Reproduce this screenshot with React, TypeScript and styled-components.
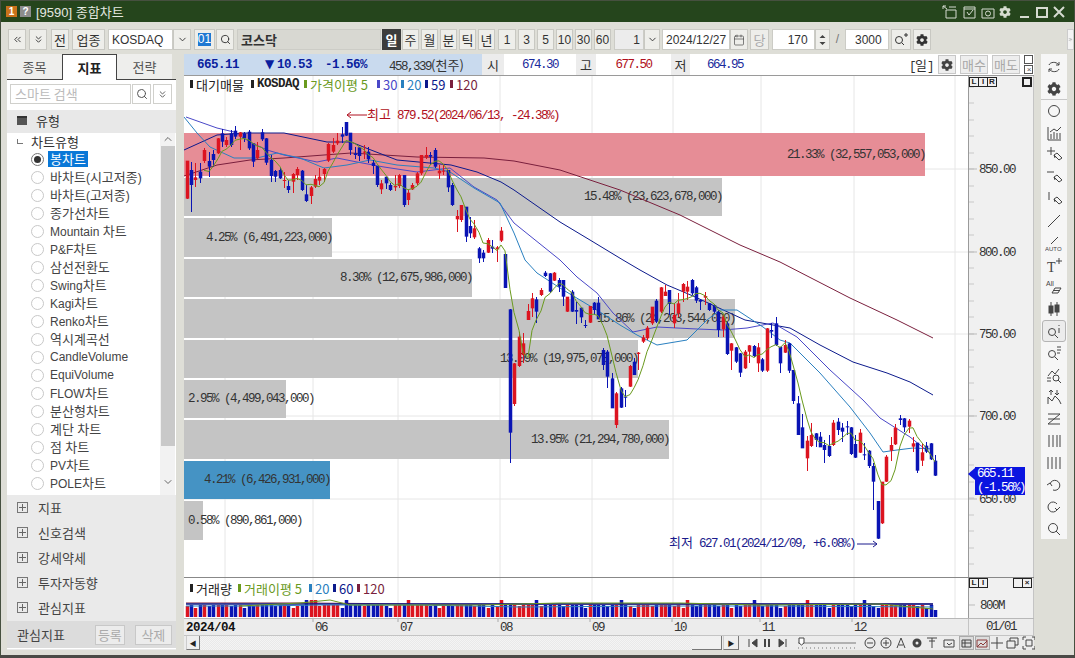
import React from "react";
import styled, { createGlobalStyle } from "styled-components";
import { FaCog } from "react-icons/fa";
import {
  Calendar,
  ChevronDown,
  ChevronUp,
  ChevronsDown,
  ChevronsLeft,
  ChevronsRight,
  Search,
} from "lucide-react";

const SANS = `"Liberation Sans", "Noto Sans CJK KR", sans-serif`;
const MONO = `"Liberation Mono", "Noto Sans CJK KR", monospace`;
const KO = `"Noto Sans CJK KR", sans-serif`;

const RED = "#dc1420";
const BLUE = "#0a14b4";
const C_MA5 = "#6a9a1e";
const C_MA20 = "#2a80c0";
const C_MA30 = "#4a48c8";
const C_MA59 = "#0c1a8c";
const C_MA120 = "#7a1f3d";

const GlobalStyle = createGlobalStyle`
  html, body { margin: 0; padding: 0; background: #deded7; overflow: hidden; }
  * { box-sizing: border-box; }
`;

const Window = styled.div`
  width: 1075px;
  height: 658px;
  display: flex;
  flex-direction: column;
  background: #deded7;
  border: 1px solid #46503f;
  border-bottom: 3px solid #4a4a46;
  font-family: ${SANS};
  font-size: 12px;
  color: #222;
  overflow: hidden;
`;

const TitleBar = styled.div`
  height: 21px;
  flex: none;
  display: flex;
  align-items: center;
  background: #25451c;
  padding: 0 8px 0 5px;
  color: #e4e8e0;
  font-size: 13px;
`;

const TitleBadge = styled.span<{ $bg: string }>`
  width: 11px;
  height: 11px;
  margin-right: 3px;
  display: flex;
  align-items: center;
  justify-content: center;
  background: ${(p) => p.$bg};
  color: #fff;
  font-size: 10px;
  font-weight: bold;
`;

const TitleText = styled.span`
  margin-left: 2px;
  flex: 1;
`;

const TitleIcons = styled.div`
  display: flex;
  align-items: center;
  gap: 3px;
  color: #d5dbd0;
`;

const Toolbar = styled.div`
  height: 31px;
  flex: none;
  display: flex;
  align-items: flex-end;
  gap: 2px;
  padding: 0 0 3px 7px;
`;

const Btn = styled.div<{ $w: number; $ml?: number; $dark?: boolean; $muted?: boolean }>`
  width: ${(p) => p.$w}px;
  height: 21px;
  flex: none;
  margin-left: ${(p) => p.$ml ?? 0}px;
  display: flex;
  align-items: center;
  justify-content: center;
  background: ${(p) => (p.$dark ? "#3c3c3c" : "#eeeeea")};
  color: ${(p) => (p.$dark ? "#fff" : p.$muted ? "#aaa" : "#333")};
  border: 1px solid ${(p) => (p.$dark ? "#3c3c3c" : "#c8c8c2")};
  font-family: ${KO};
  font-size: 13px;
  font-weight: ${(p) => (p.$dark ? 700 : 400)};
`;

const NumBtn = styled(Btn)`
  font-family: ${SANS};
  font-size: 12px;
`;

const SelectedCode = styled.span`
  background: #1e78d2;
  color: #fff;
  font-family: ${SANS};
  font-size: 12px;
  line-height: 13px;
`;

const Field = styled.div<{ $w: number; $ml?: number; $align?: string; $bg?: string; $bold?: boolean }>`
  width: ${(p) => p.$w}px;
  height: 21px;
  flex: none;
  margin-left: ${(p) => p.$ml ?? 0}px;
  display: flex;
  align-items: center;
  justify-content: ${(p) => p.$align ?? "flex-start"};
  padding: 0 3px;
  background: ${(p) => p.$bg ?? "#fff"};
  border: 1px solid #ccccc6;
  font-size: 12px;
  font-weight: ${(p) => (p.$bold ? 700 : 400)};
  color: #333;
`;

const Slash = styled.span`
  width: 11px;
  flex: none;
  text-align: center;
  color: #777;
  line-height: 21px;
`;

const Main = styled.div`
  flex: 1;
  min-height: 0;
  display: flex;
  padding: 1px 0 5px 6px;
`;

const LeftPanel = styled.div`
  width: 169px;
  flex: none;
  display: flex;
  flex-direction: column;
  background: #eaeaea;
`;

const Tabs = styled.div`
  height: 26px;
  flex: none;
  display: flex;
  background: #deded7;
  border-bottom: 1px solid #444;
`;

const Tab = styled.div<{ $active?: boolean }>`
  width: 55px;
  height: ${(p) => (p.$active ? 26 : 25)}px;
  display: flex;
  align-items: center;
  justify-content: center;
  font-family: ${KO};
  font-size: 13px;
  font-weight: ${(p) => (p.$active ? 700 : 400)};
  color: ${(p) => (p.$active ? "#222" : "#555")};
  background: ${(p) => (p.$active ? "#fff" : "#eeeeec")};
  border: ${(p) => (p.$active ? "1px solid #444" : "none")};
  border-bottom: none;
`;

const SearchRow = styled.div`
  height: 30px;
  flex: none;
  display: flex;
  align-items: flex-start;
  padding: 4px 0 0 3px;
  gap: 1px;
  background: #fff;
`;

const SearchInput = styled.div`
  width: 121px;
  height: 20px;
  border: 1px solid #d0d0cc;
  color: #bbb;
  font-family: ${KO};
  font-size: 13px;
  line-height: 17px;
  padding-left: 4px;
`;

const SearchBtn = styled.div<{ $ml?: number }>`
  width: 19px;
  height: 20px;
  margin-left: ${(p) => p.$ml ?? 0}px;
  border: 1px solid #d0d0cc;
  display: flex;
  align-items: center;
  justify-content: center;
  color: #555;
`;

const GroupHead = styled.div`
  height: 23px;
  flex: none;
  display: flex;
  align-items: center;
  padding: 0 0 2px 10px;
  gap: 9px;
  font-family: ${KO};
  font-size: 13px;
  color: #333;
  background: #e8e8e8;
`;

const FolderMark = styled.span`
  width: 10px;
  height: 9px;
  background: #555;
  border-top: 2px solid #333;
`;

const ListWrap = styled.div`
  height: 362px;
  flex: none;
  display: flex;
  background: #fff;
  overflow: hidden;
`;

const List = styled.div`
  flex: 1;
  overflow: hidden;
`;

const ListHead = styled.div`
  height: 17px;
  display: flex;
  align-items: center;
  padding-left: 10px;
  gap: 8px;
  font-family: ${KO};
  font-size: 13px;
  line-height: 15px;
  color: #333;
`;

const TreeCorner = styled.span`
  width: 6px;
  height: 5px;
  border-left: 1px solid #777;
  border-bottom: 1px solid #777;
`;

const ListRow = styled.div`
  height: 18px;
  display: flex;
  align-items: center;
  padding-left: 24px;
  gap: 4px;
  color: #444;
`;

const Radio = styled.span<{ $on?: boolean }>`
  width: 13px;
  height: 13px;
  flex: none;
  border-radius: 50%;
  border: 1px solid ${(p) => (p.$on ? "#777" : "#c8c8c8")};
  display: flex;
  align-items: center;
  justify-content: center;
  &::after {
    content: "";
    width: 7px;
    height: 7px;
    border-radius: 50%;
    background: ${(p) => (p.$on ? "#333" : "transparent")};
  }
`;

const RowLabel = styled.span<{ $on?: boolean }>`
  padding: 0 2px;
  height: 16px;
  line-height: 16px;
  white-space: nowrap;
  background: ${(p) => (p.$on ? "#0a78d7" : "transparent")};
  color: ${(p) => (p.$on ? "#fff" : "#444")};
`;

const Hangul = styled.span`
  font-family: ${KO};
  font-size: 13px;
`;

const ScrollCol = styled.div`
  width: 15px;
  flex: none;
  margin-right: 1px;
  display: flex;
  flex-direction: column;
  align-items: center;
  background: #f2f2f2;
  color: #666;
`;

const ScrollThumb = styled.div`
  width: 14px;
  height: 300px;
  margin: 1px 0 30px;
  background: #c9c9c9;
`;

const Collapsed = styled.div`
  height: 25px;
  flex: none;
  display: flex;
  align-items: center;
  padding-left: 10px;
  gap: 10px;
  font-family: ${KO};
  font-size: 13px;
  color: #444;
`;

const PlusBox = styled.span`
  width: 11px;
  height: 11px;
  border: 1px solid #777;
  position: relative;
  &::before {
    content: "";
    position: absolute;
    left: 1px;
    right: 1px;
    top: 4px;
    height: 1px;
    background: #666;
  }
  &::after {
    content: "";
    position: absolute;
    top: 1px;
    bottom: 1px;
    left: 4px;
    width: 1px;
    background: #666;
  }
`;

const LeftFooter = styled.div`
  height: 28px;
  margin-top: 1px;
  flex: none;
  display: flex;
  align-items: center;
  padding-left: 10px;
  gap: 3px;
  background: #dcdcdc;
  border-bottom: 1px solid #fff;
  font-family: ${KO};
  font-size: 13px;
  color: #444;
`;

const FooterBtn = styled.div<{ $ml: number; $w: number }>`
  width: ${(p) => p.$w}px;
  height: 20px;
  margin-left: ${(p) => p.$ml}px;
  display: flex;
  align-items: center;
  justify-content: center;
  background: #ececec;
  border: 1px solid #c8c8c8;
  color: #aaa;
`;

const ChartPanel = styled.div`
  width: 850px;
  margin-left: 8px;
  flex: none;
  display: flex;
  flex-direction: column;
  background: #fff;
`;

const QuoteBar = styled.div`
  height: 22px;
  flex: none;
  display: flex;
  align-items: center;
  border-bottom: 1px solid #9a9a9a;
  font-family: ${MONO};
  font-size: 12.5px;
  letter-spacing: -1.5px;
`;

const QuoteMain = styled.div`
  width: 298px;
  height: 21px;
  flex: none;
  display: flex;
  align-items: center;
  background: #c9daee;
`;

const QuoteNum = styled.span<{ $ml: number; $color?: string; $bold?: boolean }>`
  margin-left: ${(p) => p.$ml}px;
  color: ${(p) => p.$color ?? "#333"};
  font-weight: ${(p) => (p.$bold ? 700 : 400)};
  letter-spacing: ${(p) => (p.$bold ? "-0.5px" : "-1.5px")};
  white-space: nowrap;
`;

const Ko = styled.span`
  font-family: ${KO};
  font-size: 13px;
  letter-spacing: 0;
`;

const DownMark = styled.span`
  display: inline-block;
  width: 12px;
  font-size: 12px;
  letter-spacing: 0;
  font-family: "DejaVu Sans", sans-serif;
`;

const QuoteLabel = styled.div<{ $w: number }>`
  width: ${(p) => p.$w}px;
  height: 21px;
  flex: none;
  display: flex;
  align-items: center;
  justify-content: center;
  background: #ececec;
  font-family: ${KO};
  font-size: 13px;
  letter-spacing: 0;
  color: #333;
`;

const QuoteValue = styled.div<{ $w: number; $color: string }>`
  width: ${(p) => p.$w}px;
  flex: none;
  text-align: center;
  color: ${(p) => p.$color};
`;

const QuoteRight = styled.div`
  margin-left: auto;
  display: flex;
  align-items: center;
  height: 21px;
  padding-right: 1px;
`;

const QuoteBtn = styled.div<{ $w: number; $ml: number }>`
  width: ${(p) => p.$w}px;
  height: 19px;
  margin-left: ${(p) => p.$ml}px;
  display: flex;
  align-items: center;
  justify-content: center;
  background: #eee;
  border: 1px solid #c8c8c8;
  color: #a8a8a8;
  font-family: ${KO};
  font-size: 13px;
  letter-spacing: 0;
`;

const TinyStack = styled.div`
  width: 9px;
  margin-left: 4px;
  display: flex;
  flex-direction: column;
  gap: 1px;
`;

const TinyBox = styled.div`
  width: 9px;
  height: 9px;
  border: 1px solid #555;
  display: flex;
  align-items: center;
  justify-content: center;
  color: #555;
  font-size: 8px;
  line-height: 1;
`;

const PlotRow = styled.div<{ $h: number; $ruled?: boolean }>`
  height: ${(p) => p.$h}px;
  flex: none;
  display: flex;
  border-top: ${(p) => (p.$ruled ? "1px solid #888" : "none")};
`;

const Plot = styled.div`
  width: 784px;
  height: 100%;
  flex: none;
  position: relative;
  overflow: hidden;
`;

const Axis = styled.div`
  width: 66px;
  height: 100%;
  flex: none;
  position: relative;
  background: #f0f0f0;
  border-left: 1px solid #9a9a9a;
  border-right: 1px solid #c4c4c4;
`;

const ChartSvg = styled.svg`
  display: block;
`;

const Legend = styled.div<{ $top: number }>`
  position: absolute;
  left: 6px;
  top: ${(p) => p.$top}px;
  display: flex;
  align-items: center;
  height: 16px;
  font-family: ${KO};
  font-size: 13px;
  white-space: nowrap;
`;

const LegendItem = styled.span<{ $color: string; $w: number; $bold?: boolean }>`
  width: ${(p) => p.$w}px;
  display: flex;
  align-items: center;
  gap: 3px;
  color: ${(p) => p.$color};
  ${(p) => (p.$bold ? `font-family: ${MONO}; font-size: 12.5px; font-weight: 700; letter-spacing: -0.5px;` : "")}
  &::before {
    content: "";
    width: 3px;
    height: 8px;
    flex: none;
    background: ${(p) => p.$color};
  }
`;

const MiniBoxes = styled.div<{ $left?: number; $right?: number; $top: number }>`
  position: absolute;
  top: ${(p) => p.$top}px;
  ${(p) => (p.$left !== undefined ? `left: ${p.$left}px;` : "")}
  ${(p) => (p.$right !== undefined ? `right: ${p.$right}px;` : "")}
  display: flex;
`;

const MiniBox = styled.span<{ $heavy?: boolean }>`
  width: 10px;
  height: 10px;
  border: ${(p) => (p.$heavy ? "2px" : "1px")} solid #222;
  margin-left: -1px;
  display: flex;
  align-items: center;
  justify-content: center;
  font-family: "Liberation Sans", sans-serif;
  font-size: 8px;
  font-weight: 700;
  line-height: 1;
  color: #222;
`;

const PriceTag = styled.div`
  position: absolute;
  left: 6px;
  top: 391px;
  width: 50px;
  height: 28px;
  background: #0a14e0;
  color: #fff;
  font-family: ${MONO};
  font-size: 12.5px;
  letter-spacing: -1.5px;
  line-height: 14px;
  padding-left: 2px;
  white-space: nowrap;
  &::before {
    content: "";
    position: absolute;
    left: -7px;
    top: 1px;
    border: 6px solid transparent;
    border-left: none;
    border-right: 7px solid #0a14e0;
  }
`;

const ScaleText = styled.text`
  font-family: ${MONO};
  font-size: 12.5px;
  letter-spacing: -1.5px;
  fill: #333;
`;

const VolText = styled.text<{ $bold?: boolean; $color?: string }>`
  font-family: ${MONO};
  font-size: 12.5px;
  font-weight: ${(p) => (p.$bold ? 700 : 400)};
  letter-spacing: ${(p) => (p.$bold ? "-0.5px" : "-1.5px")};
  fill: ${(p) => p.$color ?? "#333"};
`;

const KoSpan = styled.tspan`
  font-family: ${KO};
  font-size: 13px;
  letter-spacing: 0;
`;

const DateRow = styled.div`
  height: 17px;
  flex: none;
  display: flex;
  background: #ececec;
  border-top: 1px solid #b8b8b8;
`;

const DateCell = styled.div`
  width: 784px;
  flex: none;
`;

const AxisCell = styled.div`
  width: 66px;
  flex: none;
  display: flex;
  align-items: center;
  justify-content: center;
  border-left: 1px solid #c4c4c4;
  border-right: 1px solid #c4c4c4;
  font-family: ${MONO};
  font-size: 12.5px;
  letter-spacing: -1.5px;
  color: #333;
`;

const BottomBar = styled.div`
  height: 15px;
  flex: none;
  display: flex;
  align-items: center;
  background: #ececec;
  border-top: 1px solid #c4c4c4;
`;

const ArrowBtn = styled.div<{ $ml?: number; $w: number }>`
  width: ${(p) => p.$w}px;
  height: 14px;
  flex: none;
  margin-left: ${(p) => p.$ml ?? 0}px;
  display: flex;
  align-items: center;
  justify-content: center;
  background: #efefef;
  border-right: 1px solid #777;
  border-bottom: 1px solid #777;
  border-left: 1px solid #ccc;
  font-size: 7px;
  color: #222;
`;

const Track = styled.div`
  width: 492px;
  height: 14px;
  flex: none;
  background: repeating-conic-gradient(#e9e9e9 0 25%, #f4f4f4 0 50%) 0 0 / 2px 2px;
`;

const Thumb = styled.div`
  width: 30px;
  height: 14px;
  flex: none;
  background: #f0f0f0;
  border-bottom: 1px solid #777;
  border-right: 1px solid #777;
`;

const BarIcons = styled.svg`
  display: block;
  flex: none;
  margin-left: 3px;
`;

const RightTools = styled.div`
  width: 26px;
  height: 485px;
  flex: none;
  margin-left: 7px;
  padding-top: 2px;
  display: flex;
  flex-direction: column;
  align-items: center;
  background: #f6f6f6;
`;

const ToolCell = styled.div<{ $active?: boolean; $sep?: boolean }>`
  width: 24px;
  height: 22px;
  flex: none;
  display: flex;
  align-items: center;
  justify-content: center;
  color: #444;
  border: ${(p) => (p.$active ? "1px solid #b4b4b4" : "none")};
  border-radius: ${(p) => (p.$active ? 3 : 0)}px;
  background: ${(p) => (p.$active ? "#ececec" : "transparent")};
  ${(p) => (p.$sep ? "border-bottom: 1px solid #c8c8c8; width: 26px;" : "")}
`;

const More = styled.div`
  width: 7px;
  height: 21px;
  margin-left: auto;
  flex: none;
  display: flex;
  align-items: center;
  justify-content: center;
  background: #f4f4f4;
  border: 1px solid #ccc;
  color: #666;
`;

// [high, top, bottom, low, red=1] read off the chart, grouped by crop
const SEG_A = [
  [182, 182, 296, 296, 1], [185, 210, 255, 335, 0], [190, 232, 240, 260, 1], [190, 215, 235, 250, 0],
  [145, 150, 183, 190, 1], [155, 183, 200, 230, 0], [150, 162, 180, 200, 0], [113, 115, 160, 162, 1],
  [87, 100, 125, 140, 0], [110, 120, 135, 140, 1], [90, 100, 135, 140, 0], [78, 92, 110, 118, 0],
  [95, 97, 110, 150, 1], [95, 100, 115, 125, 0], [90, 95, 145, 150, 0], [130, 130, 185, 200, 0],
  [125, 150, 175, 178, 1], [88, 97, 118, 122, 0], [115, 115, 188, 195, 0], [165, 180, 228, 245, 0],
  [210, 213, 230, 245, 0], [200, 210, 235, 238, 0], [215, 240, 243, 265, 1], [240, 258, 270, 278, 0],
  [220, 222, 245, 278, 1], [200, 207, 225, 240, 1], [210, 212, 270, 272, 0], [255, 283, 303, 305, 0],
  [258, 262, 288, 312, 1], [225, 237, 260, 265, 1], [205, 230, 242, 255, 1], [205, 207, 222, 245, 1],
  [130, 132, 182, 185, 1], [115, 135, 155, 160, 1], [98, 122, 130, 135, 1], [82, 103, 110, 130, 0],
  [66, 66, 107, 107, 0], [98, 98, 150, 165, 0], [140, 160, 165, 178, 0], [142, 142, 168, 182, 0],
  [135, 155, 158, 178, 1], [140, 155, 178, 190, 0], [180, 188, 198, 222, 0], [198, 198, 255, 262, 0],
  [240, 250, 268, 282, 1], [230, 230, 250, 268, 0], [250, 255, 270, 272, 0], [225, 258, 262, 272, 1],
  [222, 225, 258, 265, 1], [225, 225, 315, 320, 0], [270, 278, 300, 315, 1], [250, 255, 268, 270, 1],
  [215, 220, 250, 255, 1], [165, 165, 220, 225, 1], [140, 165, 172, 178, 1], [155, 165, 170, 195, 0],
  [145, 150, 200, 205, 0], [195, 212, 220, 237, 1], [192, 212, 215, 225, 1], [210, 210, 262, 275, 0],
  [250, 255, 315, 318, 0], [330, 348, 358, 395, 1], [315, 315, 360, 365, 1], [320, 320, 410, 425, 0],
  [350, 378, 400, 415, 0], [360, 385, 412, 418, 1], [442, 445, 475, 488, 0], [450, 458, 475, 485, 0],
  [415, 420, 458, 460, 1], [420, 440, 446, 458, 0], [438, 442, 448, 485, 1], [380, 392, 422, 425, 1],
  [462, 462, 564, 564, 0],
];

const SEG_B = [
  [148, 148, 518, 610, 0], [310, 310, 432, 437, 1], [215, 230, 318, 320, 1], [220, 250, 285, 310, 1],
  [132, 153, 180, 180, 1], [100, 115, 145, 170, 1], [110, 118, 155, 190, 0], [85, 90, 105, 108, 1],
  [33, 38, 48, 52, 0], [38, 40, 95, 98, 0], [35, 38, 62, 62, 1], [55, 60, 80, 95, 0],
  [60, 60, 110, 138, 0], [110, 110, 155, 155, 1], [90, 95, 155, 155, 0], [125, 150, 155, 192, 0],
  [143, 143, 172, 190, 0], [180, 195, 198, 205, 0], [138, 138, 188, 190, 1], [125, 128, 150, 165, 0],
  [112, 128, 178, 178, 0], [265, 270, 315, 330, 0], [270, 275, 350, 385, 0], [340, 355, 445, 445, 0],
  [395, 400, 495, 505, 1], [380, 385, 443, 443, 0], [390, 410, 413, 440, 0], [315, 318, 380, 382, 1],
  [295, 305, 345, 345, 0], [275, 278, 282, 330, 1], [225, 232, 245, 250, 1], [198, 203, 235, 240, 1],
  [140, 140, 190, 195, 1], [118, 122, 185, 188, 0], [82, 82, 155, 158, 1], [75, 95, 108, 108, 1],
  [90, 90, 132, 165, 0], [130, 165, 190, 205, 1], [100, 130, 160, 170, 1], [70, 72, 95, 125, 1],
  [62, 80, 95, 120, 1], [58, 60, 100, 105, 0], [78, 82, 122, 130, 0], [118, 120, 125, 150, 0],
  [95, 108, 113, 135, 1], [128, 130, 150, 152, 0], [132, 135, 155, 160, 0], [150, 155, 210, 230, 0],
  [165, 170, 208, 230, 1], [185, 190, 282, 285, 0], [248, 250, 272, 330, 1], [260, 262, 305, 310, 0],
  [278, 280, 338, 350, 0], [270, 275, 325, 328, 1], [255, 256, 275, 310, 1], [255, 258, 288, 290, 0],
  [250, 262, 310, 335, 1], [295, 298, 332, 335, 0], [205, 205, 332, 335, 1], [190, 210, 215, 235, 0],
  [172, 190, 255, 258, 0],
];

const SEG_C = [
  [80, 80, 130, 160, 0], [60, 75, 98, 98, 1], [70, 70, 152, 160, 0], [150, 150, 243, 252, 0],
  [228, 250, 345, 345, 0], [282, 322, 385, 385, 0], [347, 362, 415, 452, 1], [310, 345, 378, 380, 1],
  [338, 340, 360, 380, 0], [335, 350, 382, 382, 0], [360, 375, 390, 428, 0], [345, 378, 408, 410, 0],
  [300, 308, 375, 378, 1], [295, 305, 330, 345, 0], [310, 323, 335, 365, 0], [303, 319, 322, 345, 0],
  [322, 322, 402, 405, 0], [345, 372, 413, 413, 0], [328, 338, 398, 400, 1], [370, 403, 406, 420, 0],
  [390, 392, 438, 445, 0], [430, 438, 485, 570, 0], [543, 543, 656, 656, 0], [485, 485, 610, 612, 1],
  [405, 410, 485, 487, 1], [350, 375, 392, 423, 1], [313, 323, 373, 376, 1], [285, 295, 300, 315, 0],
  [293, 295, 322, 335, 0], [298, 302, 320, 340, 1], [350, 370, 380, 395, 1], [368, 368, 452, 458, 0],
  [370, 397, 422, 438, 1], [365, 377, 395, 400, 0], [368, 370, 418, 420, 0], [405, 422, 467, 467, 0],
];

type Candle = { high: number; top: number; bottom: number; low: number; up: boolean };

const toCandles = (base: number, rows: number[][]): Candle[] =>
  rows.map(([h, t, b, l, r]) => ({
    high: base + h / 3,
    top: base + t / 3,
    bottom: base + b / 3,
    low: base + l / 3,
    up: r === 1,
  }));

const candles = [...toCandles(100, SEG_A), ...toCandles(260, SEG_B), ...toCandles(320, SEG_C)];
const candleX = (i: number) => Math.round(186.5 + 4.43 * i);

const ma5Points = candles
  .map((_, i) => {
    if (i < 4) return null;
    let sum = 0;
    for (let k = i - 4; k <= i; k++) sum += candles[k].up ? candles[k].top : candles[k].bottom;
    return `${candleX(i)},${(sum / 5).toFixed(1)}`;
  })
  .filter(Boolean)
  .join(" ");

const MA20 =
  "184,117 197,133 210,147 234,158 257,158 277,153 300,158 324,168 347,165 370,160 397,165 434,168 450,172 474,188 500,203 514,233 525,260 537,273 560,288 580,300 600,312 620,325 637,335 657,345 687,340 707,320 720,310 737,310 763,327 780,340 790,343 820,373 850,407 870,433 883,452 897,450 913,448 933,449";
const MA30 =
  "186,117 217,128 234,132 250,142 267,150 284,155 317,162 337,158 357,162 384,167 417,172 450,168 474,187 497,200 514,223 560,260 577,277 597,293 613,313 633,332 657,327 697,329 723,330 747,328 773,323 797,337 830,370 863,400 880,418 910,437 930,453";
const MA59 =
  "184,150 217,135 244,133 284,133 327,142 351,142 371,150 397,160 451,165 477,172 501,182 514,190 560,222 590,240 623,260 640,270 667,285 693,296 745,320 790,328 820,345 853,362 887,373 910,382 933,395";
const MA120 =
  "184,176 217,165 250,160 284,158 324,155 351,153 384,155 417,157 484,158 514,161 560,170 620,190 680,215 740,245 780,262 850,298 897,320 933,338";

const PROFILE = [
  { y: 133, h: 43, x2: 925, fill: "#e68d96", label: "21.33% (32,557,053,000)" },
  { y: 178, h: 38, x2: 722, fill: "#c4c4c4", label: "15.48% (23,623,678,000)" },
  { y: 218, h: 39, x2: 332, fill: "#c4c4c4", label: "4.25% (6,491,223,000)" },
  { y: 259, h: 38, x2: 472, fill: "#c4c4c4", label: "8.30% (12,675,986,000)" },
  { y: 299, h: 39, x2: 735, fill: "#c4c4c4", label: "15.86% (24,203,544,000)" },
  { y: 340, h: 38, x2: 638, fill: "#c4c4c4", label: "13.09% (19,975,078,000)" },
  { y: 380, h: 38, x2: 286, fill: "#c4c4c4", label: "2.95% (4,499,043,000)" },
  { y: 420, h: 39, x2: 669, fill: "#c4c4c4", label: "13.95% (21,294,780,000)" },
  { y: 461, h: 38, x2: 330, fill: "#4593c4", label: "4.21% (6,426,931,000)" },
  { y: 501, h: 39, x2: 203, fill: "#c4c4c4", label: "0.58% (890,861,000)" },
];

const V_GRID = [225, 313, 398, 500, 592, 673, 761, 854, 955];
const H_GRID = [169, 252, 334, 416, 499];
const SCALE = [
  { y: 169, label: "850.00" },
  { y: 252, label: "800.00" },
  { y: 334, label: "750.00" },
  { y: 416, label: "700.00" },
  { y: 499, label: "650.00" },
];
const MONTHS = [
  { x: 315, label: "06" }, { x: 400, label: "07" }, { x: 500, label: "08" }, { x: 592, label: "09" },
  { x: 674, label: "10" }, { x: 762, label: "11" }, { x: 854, label: "12" },
];

const CHART_TYPES = [
  "봉차트", "바차트(시고저종)", "바차트(고저종)", "종가선차트", "Mountain 차트", "P&F차트",
  "삼선전환도", "Swing차트", "Kagi차트", "Renko차트", "역시계곡선", "CandleVolume",
  "EquiVolume", "FLOW차트", "분산형차트", "계단 차트", "점 차트", "PV차트", "POLE차트", "",
];

const TALL_VOL = new Set([27, 28, 29, 36, 50, 71, 79, 98, 113, 128, 140, 153]);

const volTop = (i: number) => {
  if (i === 169) return 610;
  if (TALL_VOL.has(i)) return 600;
  if ((i * 7) % 11 === 3) return 608;
  return 605 + ((i * 13) % 5 === 0 ? 1 : 0);
};

const Mixed = ({ text }: { text: string }) => (
  <>
    {text.split(/([가-힣]+)/).map((part, i) =>
      /[가-힣]/.test(part) ? <Hangul key={i}>{part}</Hangul> : part
    )}
  </>
);

const CandleLayer = () => (
  <g>
    {candles.map((c, i) => {
      const x = candleX(i);
      const color = c.up ? RED : BLUE;
      return (
        <g key={i} fill={color}>
          <rect x={x} y={c.high} width={1} height={Math.max(c.low - c.high, 1)} shapeRendering="crispEdges" />
          <rect x={x - 1.25} y={c.top} width={3.5} height={Math.max(c.bottom - c.top, 1)} />
        </g>
      );
    })}
  </g>
);

const PriceChart = () => (
  <ChartSvg width={784} height={501} viewBox="184 76 784 501">
    {V_GRID.map((x) => (
      <line key={x} x1={x} x2={x} y1={76} y2={577} stroke="#e6e6e6" />
    ))}
    {H_GRID.map((y) => (
      <line key={y} x1={184} x2={968} y1={y} y2={y} stroke="#e6e6e6" />
    ))}
    <g shapeRendering="crispEdges">
      {PROFILE.map((b) => (
        <rect key={b.y} x={184} y={b.y} width={b.x2 - 184} height={b.h} fill={b.fill} />
      ))}
    </g>
    {PROFILE.map((b) => {
      const fits = b.label.length * 6 <= b.x2 - 184;
      return (
        <VolText key={b.y} x={fits ? b.x2 : 188} y={b.y + b.h / 2 + 3} textAnchor={fits ? "end" : "start"}>
          {b.label}
        </VolText>
      );
    })}
    <polyline points={MA120} fill="none" stroke={C_MA120} />
    <polyline points={MA59} fill="none" stroke={C_MA59} />
    <polyline points={MA30} fill="none" stroke={C_MA30} />
    <polyline points={MA20} fill="none" stroke={C_MA20} />
    <CandleLayer />
    <polyline points={ma5Points} fill="none" stroke={C_MA5} />
    <path d="M347 115h20M347 115l4-3M347 115l4 3" fill="none" stroke="#b01020" />
    <VolText x={367} y={119} $color="#b01020">
      <KoSpan>최고</KoSpan> 879.52(2024/06/13, -24.38%)
    </VolText>
    <VolText x={669} y={547} $color="#1a1a8c">
      <KoSpan>최저</KoSpan> 627.01(2024/12/09, +6.08%)
    </VolText>
    <path d="M857 544h20M877 544l-4-3M877 544l-4 3" fill="none" stroke="#1a1a8c" />
  </ChartSvg>
);

const PriceScale = () => (
  <ChartSvg width={64} height={501} viewBox="968 76 64 501">
    {Array.from({ length: 30 }, (_, k) => 87 + k * 16.45).map((y) => (
      <line key={y} x1={968} x2={973} y1={Math.round(y)} y2={Math.round(y)} stroke="#c8c8c8" />
    ))}
    {SCALE.map((s) => (
      <g key={s.y}>
        <line x1={968} x2={976} y1={s.y} y2={s.y} stroke="#bbb" />
        <ScaleText x={978} y={s.y + 4}>
          {s.label}
        </ScaleText>
      </g>
    ))}
  </ChartSvg>
);

const VolumeChart = () => (
  <ChartSvg width={784} height={40} viewBox="184 578 784 40">
    {V_GRID.map((x) => (
      <line key={x} x1={x} x2={x} y1={578} y2={618} stroke="#e6e6e6" />
    ))}
    <g>
      {candles.map((c, i) => {
        const top = volTop(i);
        return <rect key={i} x={candleX(i) - 1.25} y={top} width={3.5} height={617 - top} fill={c.up ? RED : BLUE} />;
      })}
    </g>
    <polyline points="186,603 300,603 430,604 640,604 933,604" fill="none" stroke={C_MA120} />
    <polyline points="186,604 400,604 600,604 933,604" fill="none" stroke={C_MA59} strokeWidth={1.4} />
    <polyline points="186,606 260,606 320,605 420,605 520,607 660,606 780,606 933,607" fill="none" stroke={C_MA20} />
    <polyline points="240,606 300,603 330,600 350,605 480,605 560,603 680,603 760,605 880,604 933,609" fill="none" stroke={C_MA5} />
  </ChartSvg>
);

const DateAxis = () => (
  <ChartSvg width={784} height={16} viewBox="184 619 784 16">
    {MONTHS.map((m) => (
      <g key={m.label}>
        <line x1={m.x - 2} x2={m.x - 2} y1={619} y2={622} stroke="#aaa" />
        <ScaleText x={m.x} y={631}>
          {m.label}
        </ScaleText>
      </g>
    ))}
    <VolText x={186} y={631} $bold $color="#111">
      2024/04
    </VolText>
  </ChartSvg>
);

const Icon = ({ children, w = 18, h = 18 }: { children: React.ReactNode; w?: number; h?: number }) => (
  <svg width={w} height={h} viewBox={`0 0 ${w} ${h}`} fill="none" stroke="currentColor" strokeWidth={1}>
    {children}
  </svg>
);

const Pen = () => <path d="M9 9l3-2 5 5-3 2zM9 9l1 3" />;

const RIGHT_TOOLS: { key: string; icon: React.ReactNode; sep?: boolean; active?: boolean }[] = [
  { key: "swap", icon: <Icon><path d="M4 7c1-3 7-4 10 0M14 4v3h-3M14 11c-1 3-7 4-10 0M4 14v-3h3" /></Icon> },
  { key: "gear", sep: true, icon: <FaCog size={14} /> },
  { key: "circle", icon: <Icon><circle cx={9} cy={9} r={5.5} /></Icon> },
  { key: "bars", icon: <Icon><path d="M3 3v13h13M6 15v-5M9 15V8M12 15v-6M15 15V9M5 8l4-3 3 2 4-4" /></Icon> },
  { key: "h-add", icon: <Icon><path d="M2 5h8M6 1v8" /><Pen /></Icon> },
  { key: "h-sub", icon: <Icon><path d="M2 4h7" /><Pen /></Icon> },
  { key: "v-line", icon: <Icon><path d="M4 2v8" /><Pen /></Icon> },
  { key: "line", icon: <Icon><path d="M3 15L15 3" /></Icon> },
  { key: "auto", icon: <Icon><path d="M6 10l7-7" /><text x={0} y={17} fontSize={6} stroke="none" fill="currentColor" fontFamily="Liberation Sans">AUTO</text></Icon> },
  { key: "text", icon: <Icon><text x={2} y={16} fontSize={14} stroke="none" fill="currentColor" fontFamily="Liberation Serif">T</text><path d="M11 5h6M14 2v6" /></Icon> },
  { key: "all", icon: <Icon><text x={1} y={8} fontSize={7} stroke="none" fill="currentColor" fontFamily="Liberation Sans">All</text><path d="M7 15l3-5h6l-3 5zM8.500 12.500h6" /></Icon> },
  { key: "candle", icon: <Icon><path d="M6 2v14M12 2v14" /><rect x={4} y={6} width={4} height={7} fill="currentColor" /><rect x={10} y={5} width={4} height={7} fill="currentColor" /></Icon> },
  { key: "info", active: true, icon: <Icon><circle cx={7} cy={10} r={3.5} /><path d="M10 13l3 3M14 3v1M14 6v5" /></Icon> },
  { key: "q-list", icon: <Icon><circle cx={7} cy={10} r={3.5} /><path d="M10 13l3 3M12 3h4M12 6h4M12 9h3" /></Icon> },
  { key: "q-chart", icon: <Icon><circle cx={11} cy={12} r={3} /><path d="M13 14l3 3M3 10l4-5 3 3 4-5M2 12h4M2 15h4" /></Icon> },
  { key: "updown", icon: <Icon><path d="M3 16V9l4 4 3-5 4 4 2 4M6 2v5M4 4l2-2 2 2M12 7V2M10 5l2 2 2-2" /></Icon> },
  { key: "zig", icon: <Icon><path d="M3 4h12M3 9h12M3 14h12M15 4L3 14" /></Icon> },
  { key: "fib4", icon: <Icon><path d="M4 3v12M8 3v12M12 3v12M15 3v12" /></Icon> },
  { key: "fib5", icon: <Icon><path d="M3 3v12M7 3v12M11 3v12M15 3v12" /></Icon> },
  { key: "undo", icon: <Icon><path d="M5 8a5 5 0 1 1 3 6M2 9l3-2 2 3" /></Icon> },
  { key: "redo", icon: <Icon><path d="M12 12a5 5 0 1 1 0-6M15 9l-3 3-2-2" /></Icon> },
  { key: "find", icon: <Icon><circle cx={8} cy={8} r={4.5} /><path d="M11 11l4 4" /></Icon> },
];

const App: React.FC = () => {
  return (
    <Window>
      <GlobalStyle />
      <TitleBar>
        <TitleBadge $bg="#c9721c">1</TitleBadge>
        <TitleBadge $bg="#8c8c8c">?</TitleBadge>
        <TitleText>[9590] 종합차트</TitleText>
        <TitleIcons>
          <Icon w={16} h={14}><path d="M4 5h10v8H4zM1 1l4 3M1 1h3M1 1v3M7 2h7" /></Icon>
          <Icon w={16} h={14}><path d="M3 2h11v11H3zM6 7l2 3 4-5M3 4h11" /></Icon>
          <Icon w={16} h={14}><path d="M2 4h12v9H2z" /><circle cx={8} cy={8.5} r={2.500} /></Icon>
          <FaCog size={12} />
          <Icon w={18} h={14}>
            <path d="M6 12h9" strokeWidth={2} />
          </Icon>
          <Icon w={14} h={14}>
            <path d="M2 3h10v9H2z" strokeWidth={2} />
          </Icon>
          <Icon w={14} h={14}>
            <path d="M2 2l10 10M12 2L2 12" strokeWidth={2} />
          </Icon>
        </TitleIcons>
      </TitleBar>

      <Toolbar>
        <Btn $w={18}><ChevronsLeft size={11} /></Btn>
        <Btn $w={18} $ml={1}><ChevronsDown size={11} /></Btn>
        <Btn $w={18} $ml={2}>전</Btn>
        <Btn $w={33} $ml={1}>업종</Btn>
        <Field $w={65} $ml={1}>KOSDAQ</Field>
        <Btn $w={18} $ml={-2}><ChevronDown size={11} /></Btn>
        <Btn $w={21} $ml={1}><SelectedCode>01</SelectedCode></Btn>
        <Btn $w={18} $ml={-1}><Search size={11} /></Btn>
        <Field $w={144} $ml={1} $bg="#d8d8d2" $bold>
          <Ko>코스닥</Ko>
        </Field>
        <Btn $w={19} $ml={-1} $dark>일</Btn>
        <Btn $w={17} $ml={-1}>주</Btn>
        <Btn $w={17}>월</Btn>
        <Btn $w={17}>분</Btn>
        <Btn $w={17}>틱</Btn>
        <Btn $w={17}>년</Btn>
        <NumBtn $w={18} $ml={1}>1</NumBtn>
        <NumBtn $w={17}>3</NumBtn>
        <NumBtn $w={17}>5</NumBtn>
        <NumBtn $w={17}>10</NumBtn>
        <NumBtn $w={17}>30</NumBtn>
        <NumBtn $w={17}>60</NumBtn>
        <Field $w={30} $ml={1} $align="flex-end" $bg="#ececec">1</Field>
        <Btn $w={16} $ml={-2}><ChevronDown size={11} /></Btn>
        <Field $w={68}>2024/12/27</Field>
        <Btn $w={18} $ml={-2}><Calendar size={12} strokeWidth={1.2} /></Btn>
        <Btn $w={19} $muted>당</Btn>
        <Field $w={43} $ml={1} $align="flex-end">170&nbsp;</Field>
        <Btn $w={15} $ml={-2}>
          <svg width={9} height={14} viewBox="0 0 9 14"><path d="M4.500 2l3 3h-6zM4.500 12l3-3h-6z" fill="#444" /></svg>
        </Btn>
        <Slash>/</Slash>
        <Field $w={44} $align="flex-end">3000&nbsp;</Field>
        <Btn $w={20}>
          <Icon w={16} h={14}><circle cx={6} cy={7} r={3.5} /><path d="M9 10l2 2M11 2h4M13 0v4" /></Icon>
        </Btn>
        <Btn $w={18}><FaCog size={12} /></Btn>
        <More><ChevronsRight size={7} /></More>
      </Toolbar>

      <Main>
        <LeftPanel>
          <Tabs>
            <Tab>종목</Tab>
            <Tab $active>지표</Tab>
            <Tab>전략</Tab>
          </Tabs>
          <SearchRow>
            <SearchInput>스마트 검색</SearchInput>
            <SearchBtn><Search size={12} /></SearchBtn>
            <SearchBtn $ml={1}><ChevronsDown size={11} /></SearchBtn>
          </SearchRow>
          <GroupHead>
            <FolderMark />
            유형
          </GroupHead>
          <ListWrap>
            <List>
              <ListHead>
                <TreeCorner />
                차트유형
              </ListHead>
              {CHART_TYPES.map((name, i) => (
                <ListRow key={i}>
                  <Radio $on={i === 0} />
                  <RowLabel $on={i === 0}>
                    <Mixed text={name} />
                  </RowLabel>
                </ListRow>
              ))}
            </List>
            <ScrollCol>
              <ChevronUp size={12} />
              <ScrollThumb />
              <ChevronDown size={12} />
            </ScrollCol>
          </ListWrap>
          {["지표", "신호검색", "강세약세", "투자자동향", "관심지표"].map((name) => (
            <Collapsed key={name}>
              <PlusBox />
              {name}
            </Collapsed>
          ))}
          <LeftFooter>
            관심지표
            <FooterBtn $ml={27} $w={30}>등록</FooterBtn>
            <FooterBtn $ml={7} $w={37}>삭제</FooterBtn>
          </LeftFooter>
        </LeftPanel>

        <ChartPanel>
          <QuoteBar>
            <QuoteMain>
              <QuoteNum $ml={13} $color="#0a1e9e" $bold>665.11</QuoteNum>
              <QuoteNum $ml={26} $color="#0a1e9e" $bold><DownMark>▼</DownMark>10.53</QuoteNum>
              <QuoteNum $ml={13} $color="#0a1e9e" $bold>-1.56%</QuoteNum>
              <QuoteNum $ml={22}>458,339<Ko>(천주)</Ko></QuoteNum>
            </QuoteMain>
            <QuoteLabel $w={22}>시</QuoteLabel>
            <QuoteValue $w={72} $color="#1a2a9c">674.30</QuoteValue>
            <QuoteLabel $w={20}>고</QuoteLabel>
            <QuoteValue $w={75} $color="#b01020">677.50</QuoteValue>
            <QuoteLabel $w={19}>저</QuoteLabel>
            <QuoteValue $w={70} $color="#1a2a9c">664.95</QuoteValue>
            <QuoteRight>
              <QuoteNum $ml={0}>[<Ko>일</Ko>]</QuoteNum>
              <QuoteBtn $w={18} $ml={5}><FaCog size={12} color="#444" /></QuoteBtn>
              <QuoteBtn $w={28} $ml={4}>매수</QuoteBtn>
              <QuoteBtn $w={28} $ml={4}>매도</QuoteBtn>
              <TinyStack>
                <TinyBox />
                <TinyBox>×</TinyBox>
              </TinyStack>
            </QuoteRight>
          </QuoteBar>

          <PlotRow $h={501}>
            <Plot>
              <PriceChart />
              <Legend $top={0}>
                <LegendItem $color="#222" $w={61}>대기매물</LegendItem>
                <LegendItem $color="#222" $w={53} $bold>KOSDAQ</LegendItem>
                <LegendItem $color={C_MA5} $w={73}>가격이평 5</LegendItem>
                <LegendItem $color={C_MA30} $w={24}>30</LegendItem>
                <LegendItem $color={C_MA20} $w={24}>20</LegendItem>
                <LegendItem $color={C_MA59} $w={25}>59</LegendItem>
                <LegendItem $color={C_MA120} $w={30}>120</LegendItem>
              </Legend>
            </Plot>
            <Axis>
              <PriceScale />
              <MiniBoxes $left={1} $top={1}>
                <MiniBox>L</MiniBox>
                <MiniBox>I</MiniBox>
                <MiniBox>R</MiniBox>
              </MiniBoxes>
              <MiniBoxes $right={1} $top={1}>
                <MiniBox $heavy />
              </MiniBoxes>
              <PriceTag>
                665.11
                <br />
                (-1.56%)
              </PriceTag>
            </Axis>
          </PlotRow>

          <PlotRow $h={41} $ruled>
            <Plot>
              <VolumeChart />
              <Legend $top={2}>
                <LegendItem $color="#222" $w={48}>거래량</LegendItem>
                <LegendItem $color={C_MA5} $w={71}>거래이평 5</LegendItem>
                <LegendItem $color={C_MA20} $w={24}>20</LegendItem>
                <LegendItem $color={C_MA59} $w={24}>60</LegendItem>
                <LegendItem $color={C_MA120} $w={30}>120</LegendItem>
              </Legend>
            </Plot>
            <Axis>
              <ChartSvg width={64} height={40} viewBox="968 578 64 40">
                <line x1={968} x2={974} y1={605} y2={605} stroke="#bbb" />
                <ScaleText x={979} y={609}>800M</ScaleText>
              </ChartSvg>
              <MiniBoxes $left={1} $top={0}>
                <MiniBox>L</MiniBox>
                <MiniBox>I</MiniBox>
              </MiniBoxes>
              <MiniBoxes $right={1} $top={0}>
                <MiniBox />
                <MiniBox>×</MiniBox>
              </MiniBoxes>
            </Axis>
          </PlotRow>

          <DateRow>
            <DateCell>
              <DateAxis />
            </DateCell>
            <AxisCell>01/01</AxisCell>
          </DateRow>

          <BottomBar>
            <ArrowBtn $w={14} $ml={2}>◀</ArrowBtn>
            <Track />
            <Thumb />
            <ArrowBtn $w={16} $ml={1}>▶</ArrowBtn>
            <BarIcons width={293} height={14} viewBox="738 636 293 14" fill="none" stroke="#444">
              <path d="M745 639v8M753 639l-5 4 5 4z" fill="#444" />
              <path d="M761 639v8M765 639v8" strokeWidth={2} />
              <path d="M775 639l5 4-5 4zM782 639v8" fill="#444" />
              <path d="M794 643h58" stroke="#777" />
              <path d="M794 648h58" stroke="#777" strokeDasharray="1 3" />
              <path d="M795 638h5v5l-2.500 2-2.500-2z" fill="#fff" />
              <circle cx={866} cy={643} r={5} />
              <path d="M863 643h6" />
              <circle cx={882} cy={643} r={5} />
              <path d="M879 643h6M882 640v6" />
              <path d="M893 648l4-10 4 10M895 645h4" />
              <circle cx={913} cy={643} r={3} strokeWidth={3} />
              <path d="M923 638h10M928 638v10M925 641h6" />
              <path d="M940 640h10v7h-10zM943 643l2 2M948 643l-3 2" />
              <rect x={955.500} y={636.500} width={14} height={13} fill="#ddd" stroke="#aaa" />
              <path d="M958 640h9v7h-9zM958 643h9M961 640v7" />
              <rect x={971.500} y={636.500} width={14} height={13} fill="#ddd" stroke="#aaa" />
              <path d="M973 640h10v7h-10zM973 647l4-4 2 2 4-4" stroke="#8a3a3a" />
              <path d="M993 637v12M987 643h12" />
              <path d="M1003 641h8v7h-8zM1006 641v-3h8v7h-3" />
              <path d="M1019 640v-3h3M1028 637h3v3M1031 646v3h-3M1022 649h-3v-3M1022 640h6v6h-6z" />
            </BarIcons>
          </BottomBar>
        </ChartPanel>

        <RightTools>
          {RIGHT_TOOLS.map((t) => (
            <ToolCell key={t.key} $sep={t.sep} $active={t.active}>
              {t.icon}
            </ToolCell>
          ))}
        </RightTools>
      </Main>
    </Window>
  );
};

export default App;
